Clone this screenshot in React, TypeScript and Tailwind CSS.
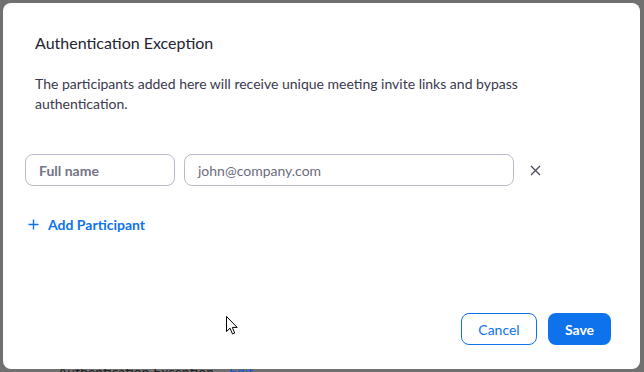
import React from "react";

export default function App() {
  return (
    <div
      className="relative w-[644px] h-[372px] overflow-hidden bg-[#707070] p-[3px]"
      style={{ fontFamily: "Lato, 'Open Sans', sans-serif" }}
    >
      <div className="absolute left-[58px] top-[362px] flex gap-[15px] text-[14px] leading-[20px] text-[#222]">
        <span>Authentication Exception</span>
        <span className="text-[#0e5ad0]">Edit</span>
      </div>
      <div className="relative flex h-[366px] w-[637px] flex-col rounded-[8px] bg-white">
        <div className="px-[32px] pt-[29px] text-[16px] leading-[22px] text-[#232333]">
          Authentication Exception
        </div>
        <p className="mt-[20px] w-[560px] px-[32px] text-[14px] leading-[20px] text-[#39394d]">
          The participants added here will receive unique meeting invite links and bypass authentication.
        </p>
        <div className="mt-[40px] flex items-center px-[22px]">
          <div className="flex h-[32px] w-[150px] items-center rounded-[8px] border border-[#babacc] px-[13px] text-[14px] font-bold text-[#747487]">
            Full name
          </div>
          <div className="ml-[9px] flex h-[32px] w-[330px] items-center rounded-[8px] border border-[#babacc] px-[13px] text-[14px] text-[#6c6c80]">
            john@company.com
          </div>
          <button className="ml-[13px] flex h-[16px] w-[16px] items-center justify-center">
            <svg width="11" height="11" viewBox="0 0 11 11">
              <path d="M1 1L10 10M10 1L1 10" stroke="#4a4a5a" strokeWidth="1.3" />
            </svg>
          </button>
        </div>
        <div className="mt-[28px] flex items-center px-[22px] text-[14px] font-bold text-[#0e72ed]">
          <svg width="11" height="11" viewBox="0 0 11 11" className="ml-[3px]">
            <path d="M5.5 0.5V10.5M0.5 5.5H10.5" stroke="#0e72ed" strokeWidth="1.4" />
          </svg>
          <span className="ml-[9px]">Add Participant</span>
        </div>
        <div className="mt-auto mb-[24px] flex justify-end gap-[11px] pr-[29px]">
          <button className="h-[32px] w-[76px] rounded-[8px] border border-[#0e72ed] text-[14px] text-[#0e72ed]">
            Cancel
          </button>
          <button className="h-[32px] w-[63px] rounded-[8px] bg-[#0e72ed] text-[14px] font-bold text-white">
            Save
          </button>
        </div>
      </div>
      <svg
        className="absolute left-[226px] top-[316px]"
        width="12"
        height="19"
        viewBox="0 0 12 19"
      >
        <path
          d="M0.5 0.5V15.5L4 12.2L6.5 18L8.7 17L6.3 11.4H11.2Z"
          fill="white"
          stroke="black"
          strokeWidth="1"
          strokeLinejoin="round"
        />
      </svg>
    </div>
  );
}
